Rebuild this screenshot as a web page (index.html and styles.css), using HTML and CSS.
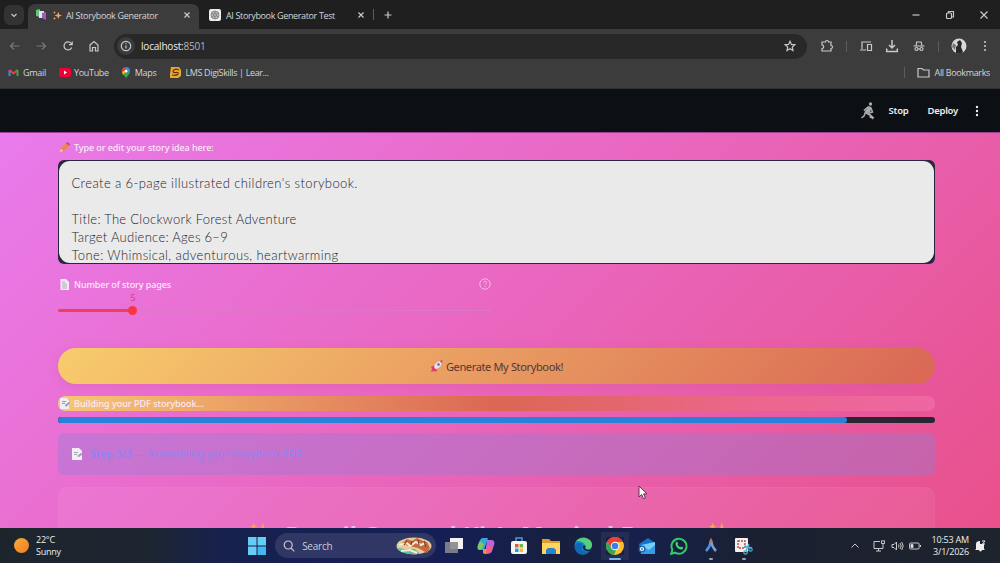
FILE: index.html
```html
<!DOCTYPE html>
<html lang="en">
<head>
    <meta charset="UTF-8">
    <meta name="viewport" content="width=device-width, initial-scale=1.0">
    <title>AI Storybook Generator</title>
    <link rel="stylesheet" href="styles.css">
</head>
<body>
    <!-- Browser tabs -->
    <div class="tab-strip">
        <button class="tab-search"><svg width="10" height="10" viewBox="0 0 10 10"><path d="M2.5 4 5 6.5 7.5 4"/></svg></button>
        <div class="tab active">
            <svg class="fill" width="12" height="12" viewBox="0 0 12 12"><path fill="#60c979" d="M1 1l4-1v8L1 7z"/><path fill="#e6e4ef" d="M4 2h5v7H4z"/><path fill="#a558bd" d="M7 4l4-1v8l-4-2z"/></svg>
            <svg class="fill sparkle" width="9" height="9" viewBox="0 0 12 12"><path fill="#f3a25e" d="M7 1l1.3 3.7L12 6 8.300 7.300 7 11 5.700 7.300 2 6l3.700-1.300zM2 0l.6 1.700L4 2l-1.400.7L2 4l-.6-1.300L0 2l1.400-.3zM2 8l.6 1.400L4 10l-1.400.6L2 12l-.6-1.400L0 10l1.400-.6z"/></svg>
            <span class="tab-title">AI Storybook Generator</span>
            <svg class="close" width="8" height="8" viewBox="0 0 8 8"><path d="M1.500 1.500l5 5m0-5l-5 5"/></svg>
        </div>
        <div class="tab second">
            <svg width="12" height="12" viewBox="0 0 12 12"><rect width="12" height="12" rx="2" fill="#eee" stroke="none"/><g stroke="#777" stroke-width=".8"><circle cx="6" cy="6" r="4" fill="#bbb"/><circle cx="6" cy="6" r="1.500"/><path d="M6 2v2.500M9.500 4L7.300 5.200M9.500 8L7.300 6.800M6 10V7.500M2.500 8l2.200-1.200M2.500 4l2.200 1.200"/></g></svg>
            <span class="tab-title">AI Storybook Generator Test</span>
            <svg class="close" width="8" height="8" viewBox="0 0 8 8"><path d="M1.500 1.500l5 5m0-5l-5 5"/></svg>
        </div>
        <i class="divider"></i>
        <svg class="new-tab" width="10" height="10" viewBox="0 0 10 10"><path d="M5 1.500v7M1.500 5h7"/></svg>
        <div class="window-buttons">
            <svg width="10" height="10" viewBox="0 0 10 10"><path d="M1.500 5h7"/></svg>
            <svg width="10" height="10" viewBox="0 0 10 10"><rect x="1.500" y="3" width="5" height="5.500" rx="1"/><path d="M3.500 3V1.500h5V7h-2"/></svg>
            <svg width="10" height="10" viewBox="0 0 10 10"><path d="M1.500 1.500l7 7m0-7l-7 7"/></svg>
        </div>
    </div>

    <!-- Address bar -->
    <div class="toolbar">
        <div class="nav-buttons">
            <svg class="disabled" width="12" height="12" viewBox="0 0 12 12"><path d="M10.500 6h-9M5 2.500L1.500 6 5 9.500"/></svg>
            <svg class="disabled" width="12" height="12" viewBox="0 0 12 12"><path d="M1.500 6h9M7 2.500L10.500 6 7 9.500"/></svg>
            <svg width="12" height="12" viewBox="0 0 12 12"><path d="M9.700 7.500A4 4 0 1 1 9.200 3.500L10 4.500M10.200 1.500v3.200H7"/></svg>
            <svg width="12" height="12" viewBox="0 0 12 12"><path d="M2 5l4-3.500L10 5v6H7.500V7.500h-3V11H2z"/></svg>
        </div>
        <div class="address">
            <span class="site-info"><svg width="12" height="12" viewBox="0 0 12 12"><circle cx="6" cy="6" r="4.700"/><path d="M6 5.500v3M6 3.300v1"/></svg></span>
            <span class="url">localhost:<span>8501</span></span>
            <svg class="star" width="12" height="12" viewBox="0 0 12 12"><path d="M6 1.300l1.400 3.100 3.400.4-2.500 2.300.7 3.400L6 8.800l-3 1.700.7-3.400L1.200 4.800l3.400-.4z"/></svg>
        </div>
        <div class="actions">
            <svg width="14" height="14" viewBox="0 0 14 14"><path d="M2 3h3.500a1.500 1.500 0 0 1 3 0H11v3.500a1.500 1.500 0 0 1 0 3V12H2V9.500a1.600 1.600 0 0 0 0-3.500z"/></svg>
            <i class="divider"></i>
            <svg width="14" height="14" viewBox="0 0 14 14"><path d="M3 10V3h9M1 11h6M8.500 5.500h4v6h-4z"/></svg>
            <svg width="14" height="14" viewBox="0 0 14 14"><path stroke-width="1.500" d="M7 1v7.500M4 6l3 3 3-3M1.700 9.500v3h10.600v-3"/></svg>
            <svg width="14" height="14" viewBox="0 0 14 14"><path d="M1.500 7h11M4 7l.8-4h4.400l.8 4M6 10h2"/><circle cx="4.500" cy="10" r="1.500"/><circle cx="9.500" cy="10" r="1.500"/></svg>
            <i class="divider"></i>
            <svg class="fill avatar" width="16" height="16" viewBox="0 0 16 16"><circle cx="8" cy="8" r="7.500" fill="#d8d8d8"/><path fill="#292929" d="M5 15V9l2-2-1-3 3-2 2 3-1 4 2 5-3 2z"/><path fill="#777" d="M2 5l3 2-1 5-3-3z"/></svg>
            <svg class="fill" width="12" height="14" viewBox="0 0 12 14"><g fill="#ccc"><circle cx="6" cy="3" r="1"/><circle cx="6" cy="7" r="1"/><circle cx="6" cy="11" r="1"/></g></svg>
        </div>
    </div>

    <!-- Bookmarks -->
    <div class="bookmarks">
        <span class="bookmark gmail"><svg width="11" height="9" viewBox="0 0 11 9"><path stroke="#4285f4" stroke-width="2" d="M1.500 8V2"/><path stroke="#ea4335" stroke-width="2" d="M1.500 2l4 3.500 4-3.500"/><path stroke="#34a853" stroke-width="2" d="M9.500 8V2"/></svg>Gmail</span>
        <span class="bookmark youtube"><svg class="fill" width="12" height="9" viewBox="0 0 12 9"><rect width="12" height="9" rx="2" fill="#f00034"/><path fill="#fff" d="M5 2.500l3 2-3 2z"/></svg>YouTube</span>
        <span class="bookmark maps"><svg class="fill" width="10" height="12" viewBox="0 0 10 12"><path fill="#34a853" d="M5 12C5 9 1 8 1 4.500L9 4c0 4-3.500 5-4 8z"/><path fill="#4285f4" d="M5 0a4 4 0 0 1 4 4L5 5z"/><path fill="#ea4335" d="M1 4.500A4 4 0 0 1 5 0v4z"/><path fill="#fbbc04" d="M1 4.500L5 4l-3 4z"/><circle cx="5" cy="4.200" r="1.400" fill="#fff"/></svg>Maps</span>
        <span class="bookmark lms"><svg class="fill" width="11" height="11" viewBox="0 0 11 11"><path fill="#eda829" d="M1 0h8l2 3v6l-3 2H0V7z"/><path fill="none" stroke="#583914" d="M9 3Q5 1 3 4q0 2 3 1.500t2 1.500Q6 9 2 8"/></svg>LMS DigiSkills | Lear...</span>
        <span class="bookmark all"><i class="divider"></i><svg width="13" height="11" viewBox="0 0 13 11"><path d="M1 1.500h4L6.500 3H12v7H1z"/></svg>All Bookmarks</span>
    </div>

    <!-- App header -->
    <header class="app-header">
        <svg class="fill" width="16" height="18" viewBox="0 0 16 18"><circle cx="10.500" cy="2" r="1.700" fill="#aaa"/><path fill="#aaa" d="M8 4l3.500 1-1.500 6-5-1z"/><path fill="none" stroke="#aaa" stroke-width="1.500" d="M8 5L4.500 8l7 6M11 6l1.500 4-3 1M5.500 10L4 14l-2.500 2M6 11l4 2 .500 3"/><path fill="none" stroke="#aaa" stroke-width="2.500" d="M10.500 14l3 2.500"/></svg>
        <span class="stop">Stop</span>
        <span class="deploy">Deploy</span>
        <svg class="fill" width="6" height="14" viewBox="0 0 6 14"><g fill="#eee"><circle cx="3" cy="3" r="1.200"/><circle cx="3" cy="7" r="1.200"/><circle cx="3" cy="11" r="1.200"/></g></svg>
    </header>

    <main class="app">
        <label class="field-label idea-label">
            <svg class="fill" width="11" height="11" viewBox="0 0 11 11"><path fill="#ef8547" d="M1 10l1-4 5-5 3 3-5 5z"/><path fill="#bd4c6b" d="M7 1l1-1 3 2-1 2z"/><path fill="#ffe0a6" d="M1 10l1-3 2 2z"/></svg>
            <span>Type or edit your story idea here:</span>
        </label>
        <div class="idea-box">
            <div class="idea-text">
                <p class="line-intro">Create a 6-page illustrated children's storybook.</p>
                <p>&nbsp;</p>
                <p>Title: The Clockwork Forest Adventure</p>
                <p>Target Audience: Ages 6–9</p>
                <p class="line-tone">Tone: Whimsical, adventurous, heartwarming</p>
            </div>
        </div>

        <div class="pages-field">
            <label class="field-label pages-label">
                <svg class="fill" width="11" height="11" viewBox="0 0 11 11"><path fill="#f2eaf2" d="M1.500 0H7l3 3v8H1.500z"/><path fill="none" stroke="#9d9aa6" stroke-width=".8" d="M3 3h3M3 5h5M3 7h5M3 9h5"/></svg>
                <span>Number of story pages</span>
                <svg class="help" width="12" height="12" viewBox="0 0 12 12"><circle cx="6" cy="6" r="5.200"/><path d="M4.500 4.700c0-2 3-2 3 0C7.500 6 6 5.800 6 7.200M6 8.300v.9"/></svg>
            </label>
            <div class="slider-value">5</div>
            <div class="slider"><div class="slider-fill"></div><div class="thumb"></div></div>
        </div>

        <button class="generate">
            <svg class="fill" width="13" height="13" viewBox="0 0 13 13"><path fill="#dc4168" d="M1 7l4-2 3 3-2 4-2-1-3 1 1-3z"/><path fill="#e8e3ee" d="M4 7c1-4 4-6 8-6.500C12 5 10 8 6 9.500z"/><path fill="#dc4168" d="M9.500 1L12.500 0 12 3.500z"/><circle cx="8.500" cy="4.500" r="1.300" fill="#5368a3"/></svg>
            <span>Generate My Storybook!</span>
        </button>

        <div class="progress-label">
            <svg class="fill" width="11" height="11" viewBox="0 0 11 11"><path fill="#f0edf5" d="M1 0h7l2 3v8H1z"/><path fill="#8d9ab8" d="M3 3h4v1H3zM3 5h3v1H3zM6 7l4-3 1 1-4 4z"/></svg>
            <span>Building your PDF storybook...</span>
        </div>
        <div class="progress"><div class="progress-bar" style="width: 90%"></div></div>

        <div class="step">
            <svg class="fill" width="11" height="12" viewBox="0 0 11 12"><path fill="#f3eef6" d="M0 0h7l3 3v9H0z"/><path fill="#9da1b4" d="M2 4h4v1H2zM2 6h3v1H2zM5 8l4-3 2 1-4 3z"/></svg>
            <span><strong>Step 3/3</strong> — Assembling your storybook PDF...</span>
        </div>

        <section class="story">
            <h1><svg class="fill" width="22" height="22" viewBox="0 0 12 12"><path fill="#f3a25e" d="M7 1l1.300 3.700L12 6 8.300 7.300 7 11 5.700 7.300 2 6l3.700-1.300zM2 1l.6 1.400L4 3l-1.400.6L2 5l-.6-1.400L0 3l1.400-.6z"/></svg><span>Pencil Opened Kit's Magical Forest</span><svg class="fill" width="22" height="22" viewBox="0 0 12 12"><path fill="#f3a25e" d="M7 1l1.300 3.700L12 6 8.300 7.300 7 11 5.700 7.300 2 6l3.700-1.300zM2 1l.6 1.400L4 3l-1.400.6L2 5l-.6-1.400L0 3l1.400-.6z"/></svg></h1>
        </section>
    </main>

    <!-- Taskbar -->
    <footer class="taskbar">
        <div class="weather">
            <i class="sun"></i>
            <div>22°C<br>Sunny</div>
        </div>
        <div class="task-icons">
            <svg class="fill" width="18" height="18" viewBox="0 0 18 18"><g fill="#66cdf5"><path d="M0 0h8.500v8.500H0z"/><path d="M9.500 0H18v8.500H9.500z"/><path d="M0 9.500h8.500V18H0z"/><path fill="#42b6ee" d="M9.500 9.500H18V18H9.500z"/></g></svg>
            <div class="search">
                <svg width="12" height="12" viewBox="0 0 12 12"><circle cx="5.200" cy="5" r="4"/><path d="M8 8l3.300 3.300"/></svg>
                <span>Search</span>
                <svg class="fill dish" width="36" height="18" viewBox="0 0 36 18"><ellipse cx="18" cy="9" rx="17.500" ry="8.500" fill="#e3cda0"/><path fill="#c9683f" d="M5 7l6-5 5 2 5-3 6 3 4 1 3 6-3 5-9-5z"/><path fill="#4fc2ae" d="M1 11l8 1 10 0 5 5-10 0Q4 16 1 11z"/><path fill="none" stroke="#f7eccb" stroke-width="2" d="M3 8l8-2 3 3 6-4 5 3 4-2M5 14l9-1 7 3"/><path fill="none" stroke="#694831" d="M11 4l-3 4m8-4l-1 4m7-5l1 5m5-4l2 6"/></svg>
            </div>
            <svg class="fill" width="18" height="18" viewBox="0 0 18 18"><path fill="#f2f2f2" d="M5 1h13v11H5z"/><path fill="#85878d" fill-opacity=".9" d="M0 5h13v11H0z"/></svg>
            <svg class="fill" width="18" height="18" viewBox="0 0 18 18"><path fill="#32a9db" d="M5 1h6L7 13H3c-3 0-3-2-2-5l2-5z"/><path fill="#7cc85c" d="M1 8l2-4 4 3-2 5-2 1q-3-1-2-5z"/><path fill="#ba65dc" d="M10 3h4c3 0 4 2 3 5l-2 6c-1 3-5 3-7 3z"/><path fill="#f28a55" d="M6 12h5l-1 4q-2 2-4 0z"/><path fill="#f25e86" d="M10 8l6 2-2 5-5 2z"/></svg>
            <svg class="fill" width="18" height="18" viewBox="0 0 18 18"><path fill="none" stroke="#3fa1d8" stroke-width="1.500" d="M6 5V1h6v4"/><rect x="1" y="4" width="16" height="13" rx="2" fill="#f4f4f4"/><path fill="#e95738" d="M5 7h3.500v3.500H5z"/><path fill="#76b93f" d="M9.500 7H13v3.500H9.500z"/><path fill="#299edb" d="M5 11.500h3.500V15H5z"/><path fill="#f5bd30" d="M9.500 11.500H13V15H9.500z"/></svg>
            <svg class="fill" width="18" height="18" viewBox="0 0 18 18"><path fill="#dc9f2c" d="M0 2h7l2 2h9v13H0z"/><path fill="#ffd35d" d="M0 6h18v11H0z"/><path fill="#2584d0" d="M4 17v-4l2-2h6l2 2v4z"/></svg>
            <svg class="fill" width="18" height="18" viewBox="0 0 18 18"><circle cx="9" cy="9" r="8.500" fill="#168bd2"/><path fill="#55cf79" d="M2 4c6-6 17-3 16 5-1 5-8 4-7 1 1-4-4-6-9-6z"/><path fill="#1467b4" d="M1 8c4-5 10-1 7 2-1 4 4 6 8 4C9 22-1 16 1 8z"/><path fill="#19204a" d="M9 9c2-1 4 0 2 2 1 2 4 2 6 1l-1 2c-5 1-8-2-7-5z"/></svg>
            <span class="running open"><svg class="fill" width="18" height="18" viewBox="0 0 18 18"><circle cx="9" cy="9" r="9" fill="#fbc02d"/><path fill="#e94235" d="M1.200 4.500A9 9 0 0 1 17 5H9L5.200 11z"/><path fill="#34a853" d="M1.200 4.500L5.500 11 10 13l-2 5A9 9 0 0 1 1.200 4.500z"/><circle cx="9" cy="9" r="4.300" fill="#fff"/><circle cx="9" cy="9" r="3.300" fill="#3b7ded"/></svg></span>
            <svg class="fill" width="18" height="18" viewBox="0 0 18 18"><path fill="#1473c8" d="M1 7l9-6 7 5v11H3z"/><path fill="#76cff6" d="M3 8l14-3v12H4z"/><path fill="#3a9be5" d="M3 9l8 4 6-5v9H3z"/><circle cx="4" cy="12" r="3.500" fill="#1665b4"/><circle cx="4" cy="12" r="1.500" fill="none" stroke="#fff"/></svg>
            <svg width="18" height="18" viewBox="0 0 18 18"><path stroke="#35c867" stroke-width="2" d="M1.200 16.800l1.200-4A7.500 7.500 0 1 1 5.200 15.700z"/><path fill="#45d374" stroke="none" d="M6 5l1-.5 1.200 2.200-.7 1.100 2.500 2.500 1.200-.7 2 1-.6 1.600C9 14 4 8.500 6 5z"/></svg>
            <span class="running"><svg width="18" height="18" viewBox="0 0 18 18"><path stroke="#4c91e8" stroke-width="2.500" d="M4 14Q8 10 9 4"/><path stroke="#7f9dca" stroke-width="2.500" d="M9 4Q10 10 14 14"/><path stroke="#c07466" stroke-width="2" d="M8 5l1-2 1 2"/></svg></span>
            <span class="running"><svg width="18" height="18" viewBox="0 0 18 18"><rect x="0" y="1" width="13" height="14" rx="1" fill="#f5f0ef" stroke="none"/><path stroke="#c6494b" stroke-width="1.500" stroke-dasharray="2 1" d="M3 4h7v7H3z"/><path stroke="#4cb1d2" stroke-width="1.500" d="M9 9l8 2M14 7l-3 7"/><circle cx="10.500" cy="15.500" r="1.700" stroke="#4cb1d2"/><circle cx="15.500" cy="12.500" r="1.700" stroke="#4cb1d2"/></svg></span>
        </div>
        <div class="tray">
            <svg width="10" height="10" viewBox="0 0 10 10"><path d="M1.500 6.500L5 3l3.500 3.500"/></svg>
            <svg class="network" width="12" height="12" viewBox="0 0 12 12"><path d="M7 1.500H1v7h9V5M5.500 8.500V11M3 11h5"/><path d="M8.500.8h3v2.700h-3zM10 3.500V5"/></svg>
            <svg class="volume" width="13" height="10" viewBox="0 0 13 10"><path d="M1 3.500h2L5.500 1v8L3 6.500H1zM7.500 3.500q1 1.500 0 3M9 2q2.500 3 0 6M10.700 1q3 4 0 8"/></svg>
            <svg class="battery" width="12" height="8" viewBox="0 0 12 8"><rect x=".6" y="1" width="9.500" height="6" rx="1"/><path d="M11.500 3v2"/><path fill="#eee" d="M2 2.500h2v3H2z"/></svg>
            <div class="clock">10:53 AM<br>3/1/2026</div>
            <svg class="fill" width="11" height="12" viewBox="0 0 11 12"><path fill="#eee" d="M1 9V4q0-3 4-3v3h4v5l1 1H0zM4 10h3q-1.500 3-3 0z"/><path fill="none" stroke="#eee" d="M7 1h3L7.500 4H10"/></svg>
        </div>
    </footer>

    <svg class="cursor" width="10" height="15" viewBox="0 0 10 15"><path d="M1 1v11l2.700-2.500 1.800 4.200 1.900-.8-1.800-4H9z"/></svg>
</body>
</html>
```
FILE: styles.css
```css
/* General Layout and Reset */
* {
    margin: 0;
    padding: 0;
    box-sizing: border-box;
}
body {
    display: flex;
    flex-direction: column;
    width: 1000px;
    height: 563px;
    overflow: hidden;
    font-family: "Open Sans", sans-serif;
    font-size: 9px;
    color: #d5d5d5;
    background: #1f1f1f;
    white-space: nowrap;
}
svg {
    display: block;
    flex: none;
    fill: none;
    stroke: #c9c9c9;
    stroke-width: 1.2;
}
svg.fill {
    stroke: none;
}
button {
    border: none;
    font: inherit;
}
.divider {
    width: 1px;
    height: 11px;
    background: #5d5d5d;
}

/* Browser chrome */
.tab-strip {
    display: flex;
    align-items: center;
    height: 29px;
    flex: none;
    padding-left: 4px;
    background: #1f1f1f;
}
.tab-search {
    display: grid;
    place-items: center;
    width: 20px;
    height: 20px;
    border-radius: 6px;
    background: #333;
}
.tab {
    display: flex;
    align-items: center;
    height: 25px;
    width: 171px;
    padding: 0 9px 0 10px;
}
.tab.active {
    align-self: flex-end;
    margin-left: 4px;
    padding: 0 8px 3px 7px;
    border-radius: 7px 7px 0 0;
    background: #3c3c3c;
}
.tab.second {
    width: 174px;
    height: 27px;
    padding: 1px 8px 0 10px;
}
.sparkle {
    margin-left: 6px;
}
.tab-title {
    margin-left: 4px;
    letter-spacing: -0.32px;
}
.second .tab-title {
    margin-left: 5px;
    letter-spacing: -0.36px;
}
.close {
    margin-left: auto;
}
.new-tab {
    margin-left: 9px;
}
.window-buttons {
    display: flex;
    gap: 24px;
    margin-left: auto;
    padding-right: 11px;
}
.toolbar {
    display: flex;
    align-items: center;
    height: 34px;
    flex: none;
    padding-right: 9px;
    background: #3c3c3c;
}
.nav-buttons {
    display: flex;
    gap: 14.400px;
    padding-left: 9px;
    width: 114px;
}
.disabled {
    stroke: #777;
}
.address {
    display: flex;
    align-items: center;
    width: 693px;
    height: 25px;
    padding: 0 11px 0 3px;
    border-radius: 13px;
    background: #282828;
    font-size: 10px;
}
.site-info {
    display: grid;
    place-items: center;
    width: 18px;
    height: 18px;
    border-radius: 50%;
    background: #3b3b3b;
}
.url {
    margin-left: 6px;
    color: #eee;
    letter-spacing: -0.2px;
}
.url span {
    color: #b5b5b5;
}
.star {
    margin-left: auto;
}
.actions {
    display: flex;
    align-items: center;
    justify-content: space-between;
    width: 171px;
    margin-left: auto;
}
.bookmarks {
    display: flex;
    align-items: center;
    height: 26px;
    flex: none;
    padding: 0 10px 6px 8px;
    background: #3c3c3c;
    border-bottom: 1px solid #303030;
}
.bookmark {
    display: flex;
    align-items: center;
    gap: 4px;
    letter-spacing: -0.3px;
}
.youtube {
    margin-left: 13px;
    gap: 3px;
}
.maps {
    margin-left: 12px;
}
.lms {
    margin-left: 13px;
    gap: 5px;
    letter-spacing: -0.37px;
}
.all {
    margin-left: auto;
    gap: 5px;
    letter-spacing: -0.35px;
}
.all .divider {
    margin-right: 7px;
}

/* App header */
.app-header {
    display: flex;
    align-items: center;
    justify-content: flex-end;
    height: 43px;
    flex: none;
    padding-right: 20px;
    background: #0c1015;
    color: #eee;
    font-family: "Noto Sans", sans-serif;
    font-size: 9.500px;
    font-weight: 600;
    letter-spacing: -0.25px;
}
.stop {
    margin-left: 13px;
}
.deploy {
    margin: 0 16px 0 19px;
}

/* Story form */
.app {
    display: flex;
    flex-direction: column;
    flex: 1;
    min-height: 0;
    overflow: hidden;
    padding: 7px 65px 0 58px;
    background: linear-gradient(135deg, #e97bec 0%, #e966be 50%, #e8508a 100%);
    border-top: 1px solid #a03f96;
    font-family: "Noto Sans", sans-serif;
    color: #fdeafa;
}
.field-label {
    display: flex;
    align-items: center;
    gap: 4px;
    height: 14px;
    flex: none;
    padding-left: 1px;
    font-size: 9px;
    font-weight: 500;
}
.idea-label span {
    letter-spacing: -0.08px;
}
.pages-label span {
    letter-spacing: -0.1px;
}
.idea-box {
    height: 104px;
    flex: none;
    margin-top: 6px;
    padding: 1px;
    overflow: hidden;
    border-radius: 6px;
    background: #29263f;
}
.idea-text {
    height: 102px;
    padding: 13px 12.500px;
    overflow: hidden;
    border-radius: 11px;
    background: #eaeaea;
    color: #24242c;
    font-family: Lato, sans-serif;
    font-weight: 300;
    font-size: 13px;
    line-height: 18px;
    letter-spacing: 0.28px;
}
.line-intro,
.line-tone {
    letter-spacing: 0.4px;
}
.pages-field {
    width: 433px;
    height: 84px;
    flex: none;
    padding-top: 13px;
}
.help {
    margin-left: auto;
    stroke: #f7b7e5;
    stroke-width: 1;
}
.slider-value {
    width: 10px;
    margin-left: 70px;
    text-align: center;
    font-size: 9px;
    line-height: 13px;
    color: #d83f79;
}
.slider {
    display: flex;
    align-items: center;
    height: 13px;
    background: linear-gradient(#d979c8, #d979c8) center / 100% 1px no-repeat;
}
.slider-fill {
    width: 72px;
    height: 3px;
    border-radius: 2px;
    background: #ef3f5c;
}
.thumb {
    width: 9px;
    height: 9px;
    margin-left: -2px;
    border-radius: 50%;
    background: #f8363f;
}
.generate {
    display: flex;
    align-items: center;
    justify-content: center;
    gap: 3px;
    height: 36px;
    flex: none;
    border-radius: 18px;
    background: linear-gradient(135deg, #f8cc6d, #d96755);
    box-shadow: 0 2px 8px rgba(210, 90, 140, 0.35);
    color: #4f3935;
    font-size: 11px;
    letter-spacing: -0.35px;
}
.progress-label {
    display: flex;
    align-items: center;
    gap: 4px;
    height: 15px;
    flex: none;
    margin-top: 12px;
    padding-left: 1px;
    border-radius: 7px;
    background: linear-gradient(90deg, #f7c773, #db6754 50%, #ec668b 78%, #ef66a3);
    font-weight: 500;
}
.progress {
    height: 6px;
    flex: none;
    margin-top: 6px;
    overflow: hidden;
    border-radius: 3px;
    background: #292631;
}
.progress-bar {
    height: 6px;
    border-radius: 3px;
    background: #2982da;
}
.step {
    display: flex;
    align-items: center;
    gap: 7px;
    height: 42px;
    flex: none;
    margin-top: 10px;
    padding-left: 14px;
    border-radius: 6px;
    background: rgba(130, 130, 220, 0.33);
    color: #9284f0;
    font-size: 10.500px;
    letter-spacing: -0.1px;
}
.story {
    height: 90px;
    flex: none;
    margin-top: 12px;
    padding-top: 33px;
    border: 1px solid rgba(255, 255, 255, 0.03);
    border-radius: 10px;
    background: rgba(255, 255, 255, 0.06);
}
.story h1 {
    display: flex;
    justify-content: center;
    gap: 13px;
    margin-left: -12px;
    color: #f5bce8;
    font-size: 24px;
    line-height: 28px;
}

/* Taskbar */
.taskbar {
    display: flex;
    align-items: center;
    height: 35px;
    flex: none;
    background: linear-gradient(90deg, #1d252c 0%, #1c2530 15%, #17214d 22%, #151f56 44%, #181f3e 56%, #17204c 64%, #1a2030 76%, #1d242d 100%);
    color: #eee;
    line-height: 12px;
}
.weather {
    display: flex;
    align-items: center;
    gap: 7px;
    width: 248px;
    padding-left: 14px;
    letter-spacing: -0.25px;
}
.sun {
    width: 15px;
    height: 15px;
    border-radius: 50%;
    background: linear-gradient(135deg, #f8ad36, #ee7c29);
}
.task-icons {
    display: flex;
    align-items: center;
    gap: 14.150px;
    width: 507px;
}
.search {
    display: flex;
    align-items: center;
    width: 161px;
    height: 25px;
    margin: 0 -5px;
    padding: 0 4px 0 8px;
    border-radius: 13px;
    background: #303764;
    font-size: 10px;
}
.search span {
    margin-left: 7px;
    color: #c9cbdc;
    letter-spacing: -0.25px;
}
.dish {
    margin-left: auto;
}
.running {
    position: relative;
}
.running::after {
    content: "";
    position: absolute;
    left: 7px;
    bottom: -5px;
    width: 4px;
    height: 2px;
    border-radius: 1px;
    background: #9ba1ad;
}
.running.open {
    box-shadow: 0 0 0 5px rgba(255, 255, 255, 0.06);
}
.running.open::after {
    left: 3px;
    width: 12px;
    background: #74b6ed;
}
.tray {
    display: flex;
    align-items: center;
    margin-left: auto;
    padding-right: 14px;
}
.tray svg {
    stroke-width: 1;
}
.network {
    margin-left: 13px;
}
.volume {
    margin-left: 6px;
}
.battery {
    margin-left: 5px;
}
.clock {
    margin: 0 6px 0 11px;
    text-align: right;
    letter-spacing: -0.2px;
}

.cursor {
    position: absolute;
    left: 638px;
    top: 485px;
    fill: #fff;
    stroke: #55364e;
    stroke-width: 1;
}
```
